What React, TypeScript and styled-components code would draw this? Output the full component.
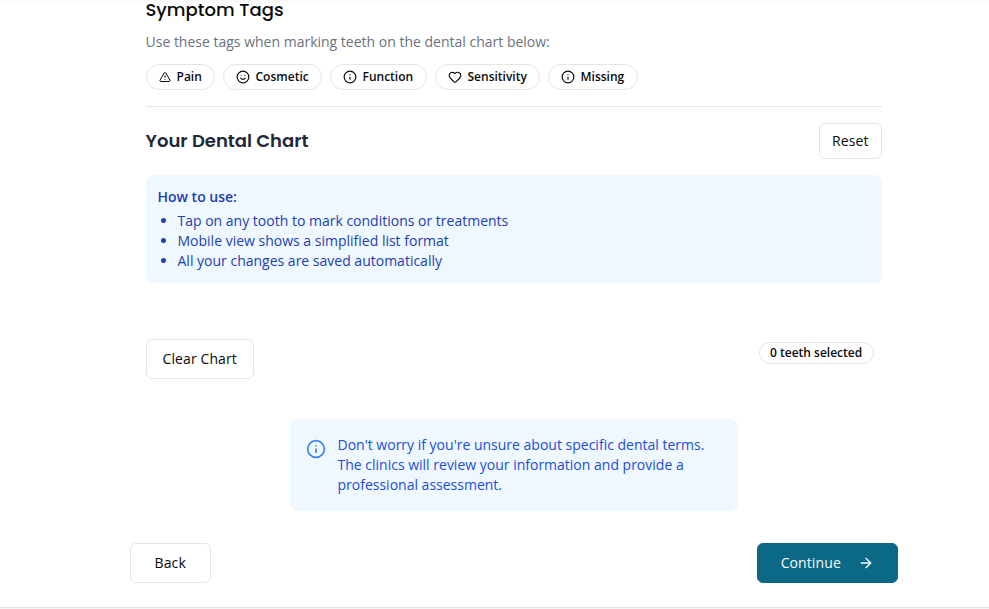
import React from 'react';
import styled, { createGlobalStyle } from 'styled-components';
import { ArrowRight, Heart, Info, Smile, TriangleAlert } from 'lucide-react';

const GlobalStyle = createGlobalStyle`
  *, *::before, *::after { box-sizing: border-box; }
  body {
    margin: 0;
    background: #fff;
    color: #0a0a0a;
    font-family: "Open Sans", sans-serif;
    font-size: 14px;
    line-height: 20px;
    overflow: hidden;
  }
  h2, h3, p, ul { margin: 0; padding: 0; }
  button { font: inherit; }
`;

const Page = styled.div`
  height: 609px;
  display: flex;
  flex-direction: column;
  background: linear-gradient(#f8f8f8, #fff 4px);
`;

const Main = styled.main`
  width: 768px;
  height: 607px;
  flex: none;
  margin-left: 129.5px;
`;

const Section = styled.section`
  padding: 0 16px;
`;

const Heading = styled.h2<{ $color?: string; $weight?: number }>`
  font-family: Poppins, Inter, sans-serif;
  font-size: 18px;
  font-weight: ${(p) => p.$weight ?? 600};
  line-height: 20px;
  color: ${(p) => p.$color ?? '#0a0a0a'};
`;

const TagSection = styled.div`
  height: 107px;
  border-bottom: 1px solid #e5e5e5;
`;

const Description = styled.p`
  margin-top: 12px;
  color: #6b7280;
`;

const TagList = styled.div`
  display: flex;
  gap: 8px;
  margin-top: 12px;
`;

const Badge = styled.span<{ $height: number; $pad: number; $width: number }>`
  display: inline-flex;
  align-items: center;
  gap: 6px;
  height: ${(p) => p.$height}px;
  width: ${(p) => p.$width}px;
  padding: 0 ${(p) => p.$pad}px;
  border: 1px solid #e5e5e5;
  border-radius: 999px;
  background: #fff;
  font-size: 12px;
  font-weight: 600;
  line-height: 16px;
  white-space: nowrap;
  svg { flex: none; }
`;

const ChartHeader = styled.div`
  display: flex;
  justify-content: space-between;
  align-items: center;
  margin-top: 16px;
`;

const Button = styled.button<{ $width: number; $height?: number; $primary?: boolean }>`
  display: inline-flex;
  align-items: center;
  justify-content: center;
  gap: 17px;
  width: ${(p) => p.$width}px;
  height: ${(p) => p.$height ?? 40}px;
  padding: 0 0 0 0.5px;
  border: 1px solid ${(p) => (p.$primary ? '#0c6986' : '#e5e5e5')};
  border-radius: 6px;
  background: ${(p) => (p.$primary ? '#0c6986' : '#fff')};
  color: ${(p) => (p.$primary ? '#f8fafc' : '#0a0a0a')};
  font-weight: 500;
  letter-spacing: 0.1px;
`;

const Instructions = styled.div`
  margin-top: 16px;
  height: 108px;
  padding: 12px;
  border-radius: 8px;
  background: #eff7ff;
  color: #1e40af;
`;

const InstructionsTitle = styled.p`
  font-weight: 600;
  margin-bottom: 4px;
`;

const InstructionList = styled.ul`
  padding-left: 20px;
  list-style: disc;
`;

const ChartFooter = styled.div`
  display: flex;
  justify-content: space-between;
  align-items: flex-start;
  margin-top: 56px;
`;

const CountWrap = styled.div`
  display: flex;
  padding: 3px 8px 0 0;
`;

const Notice = styled.aside`
  display: flex;
  gap: 12px;
  width: 448px;
  height: 92px;
  margin: 40px auto 0;
  padding: 16px;
  border-radius: 8px;
  background: #eff7ff;
  color: #1d4ed8;
  svg { flex: none; margin-top: 4px; color: #3b82f6; }
`;

const Actions = styled.div`
  display: flex;
  justify-content: space-between;
  margin-top: 32px;
`;

const BottomEdge = styled.footer`
  flex: none;
  height: 2px;
  border-top: 1px solid #e5e5e5;
  background: #f5f5f5;
`;

const tags = [
  { label: 'Pain', Icon: TriangleAlert, size: 12, width: 69 },
  { label: 'Cosmetic', Icon: Smile, size: 14, width: 99 },
  { label: 'Function', Icon: Info, size: 14, width: 97 },
  { label: 'Sensitivity', Icon: Heart, size: 14, width: 105 },
  { label: 'Missing', Icon: Info, size: 14, width: 90 },
];

export default function App() {
  return (
    <Page>
      <GlobalStyle />
      <Main>
        <Section>
          <TagSection>
            <Heading $weight={500}>Symptom Tags</Heading>
            <Description>Use these tags when marking teeth on the dental chart below:</Description>
            <TagList>
              {tags.map(({ label, Icon, size, width }) => (
                <Badge key={label} $height={26} $pad={12} $width={width}>
                  <Icon size={size} />
                  {label}
                </Badge>
              ))}
            </TagList>
          </TagSection>
          <ChartHeader>
            <Heading as="h3" $color="#1f2937">Your Dental Chart</Heading>
            <Button $width={63} $height={36}>Reset</Button>
          </ChartHeader>
          <Instructions>
            <InstructionsTitle>How to use:</InstructionsTitle>
            <InstructionList>
              <li>Tap on any tooth to mark conditions or treatments</li>
              <li>Mobile view shows a simplified list format</li>
              <li>All your changes are saved automatically</li>
            </InstructionList>
          </Instructions>
          <ChartFooter>
            <Button $width={108}>Clear Chart</Button>
            <CountWrap>
              <Badge $height={22} $pad={10.5} $width={115}>0 teeth selected</Badge>
            </CountWrap>
          </ChartFooter>
        </Section>
        <Notice>
          <Info size={20} />
          <p>
            Don't worry if you're unsure about specific dental terms. The clinics will review your
            information and provide a professional assessment.
          </p>
        </Notice>
        <Actions>
          <Button $width={81}>Back</Button>
          <Button $width={141} $primary>
            Continue
            <ArrowRight size={16} />
          </Button>
        </Actions>
      </Main>
      <BottomEdge />
    </Page>
  );
}
